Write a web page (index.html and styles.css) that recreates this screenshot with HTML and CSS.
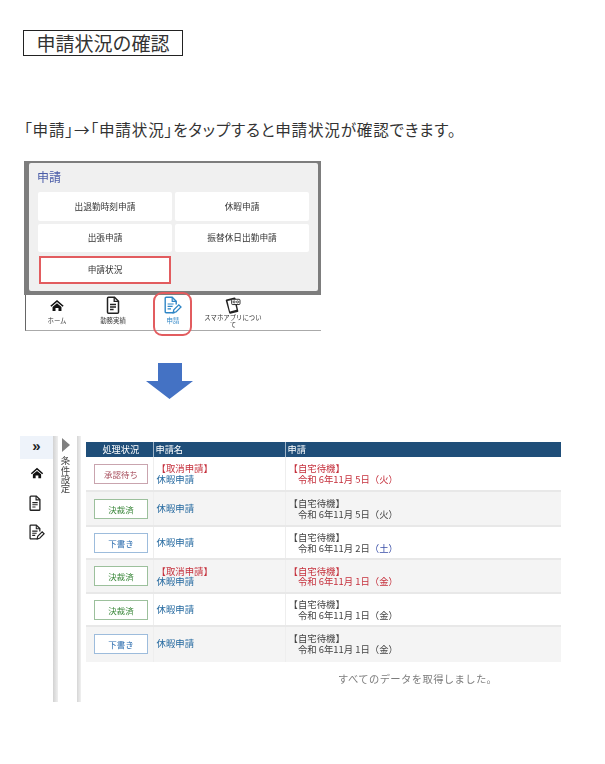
FILE: index.html
```html
<!DOCTYPE html>
<html lang="ja">
<head>
<meta charset="utf-8">
<title>申請状況の確認</title>
<link rel="stylesheet" href="styles.css">
</head>
<body>
<svg class="defs" width="0" height="0" aria-hidden="true">
  <symbol id="i-home" viewBox="0 0 16 14"><path d="M8 1 .8 7.2 2 8.4 8 3.3l6 5.1 1.2-1.2z"/><path d="M3.2 8.6 8 4.6l4.8 4V13H9.6V9.8H6.4V13H3.2z"/></symbol>
  <symbol id="i-doc" viewBox="0 0 14 18"><path fill="none" stroke="currentColor" stroke-width="1.5" d="M1.5 2.2q0-1 1-1h6l4 4v11q0 1-1 1h-9q-1 0-1-1z"/><path fill="none" stroke="currentColor" stroke-width="1.3" d="M8.2 1.2v4.2h4.3M4 8.5h6M4 11h6M4 13.5h3.6"/></symbol>
  <symbol id="i-edit" viewBox="0 0 18 18"><path fill="none" stroke="currentColor" stroke-width="1.4" d="M10.5 16.8H2.2q-1 0-1-1V2.2q0-1 1-1h6l4 4v3.2"/><path fill="none" stroke="currentColor" stroke-width="1.2" d="M8.2 1.2v4.2h4.2M3.6 8h6M3.6 10.4h5M3.6 12.8h3.4"/><path fill="none" stroke="currentColor" stroke-width="1.3" d="m9.2 16.6.6-2.8 5-5 2.2 2.2-5 5z"/></symbol>
  <symbol id="i-phone" viewBox="0 0 16 18"><path d="M1 2.6 9.4.6q1-.2 1.2.8l3 13.4q.2 1-.8 1.2l-7.6 1.8q-1 .2-1.2-.8L.3 3.8Q.1 2.8 1 2.6z"/><path fill="#fff" d="m2.2 4.2 7-1.6 2.6 11-7 1.7z"/><rect x="6.6" y="2.4" width="8.8" height="5.6" rx="1" fill="#fff" stroke="#222"/><circle cx="9.2" cy="5.2" r="1.1" fill="none" stroke="#222" stroke-width=".8"/><circle cx="12.8" cy="5.2" r="1.1" fill="none" stroke="#222" stroke-width=".8"/></symbol>
</svg>

<main class="page">
  <h1 class="title">申請状況の確認</h1>
  <p class="lead">「申請」→「申請状況」をタップすると申請状況が確認できます。</p>

  <section class="phone-shot">
    <div class="menu-frame">
      <div class="menu">
        <h2 class="menu-title">申請</h2>
        <div class="menu-grid">
          <div class="menu-btn">出退勤時刻申請</div>
          <div class="menu-btn">休暇申請</div>
          <div class="menu-btn">出張申請</div>
          <div class="menu-btn">振替休日出勤申請</div>
          <div class="menu-btn menu-btn-marked">申請状況</div>
        </div>
      </div>
    </div>
    <nav class="tabs">
      <div class="tab"><svg class="tab-icon ic-home"><use href="#i-home"/></svg><span>ホーム</span></div>
      <div class="tab"><svg class="tab-icon ic-doc"><use href="#i-doc"/></svg><span>勤務実績</span></div>
      <div class="tab tab-active"><svg class="tab-icon ic-edit"><use href="#i-edit"/></svg><span>申請</span></div>
      <div class="tab"><svg class="tab-icon ic-phone"><use href="#i-phone"/></svg><span class="tab-wrap">スマホアプリについて</span></div>
    </nav>
  </section>

  <svg class="arrow" viewBox="0 0 47 36" aria-hidden="true"><path d="M12 0h24v18h11L23.5 36 0 18h12z"/></svg>

  <section class="list-shot">
    <aside class="side">
      <div class="side-top">»</div>
      <svg class="side-icon side-home"><use href="#i-home"/></svg>
      <svg class="side-icon side-doc"><use href="#i-doc"/></svg>
      <svg class="side-icon side-edit"><use href="#i-edit"/></svg>
    </aside>
    <div class="filter">
      <span class="filter-arrow"></span>
      <span class="filter-text">条件設定</span>
    </div>
    <div class="content">
      <table class="list">
        <colgroup><col class="c1"><col class="c2"><col class="c3"></colgroup>
        <thead>
          <tr><th class="center">処理状況</th><th>申請名</th><th>申請</th></tr>
        </thead>
        <tbody>
          <tr class="r1">
            <td><div class="badge badge-wait">承認待ち</div></td>
            <td><div class="red">【取消申請】</div><div class="blue">休暇申請</div></td>
            <td class="red"><div>【自宅待機】</div><div>　令和 6年11月 5日（火）</div></td>
          </tr>
          <tr class="r2">
            <td><div class="badge badge-done">決裁済</div></td>
            <td><div class="blue">休暇申請</div></td>
            <td><div>【自宅待機】</div><div>　令和 6年11月 5日（火）</div></td>
          </tr>
          <tr class="r3">
            <td><div class="badge badge-draft">下書き</div></td>
            <td><div class="blue">休暇申請</div></td>
            <td><div>【自宅待機】</div><div>　令和 6年11月 2日<span class="sat">（土）</span></div></td>
          </tr>
          <tr class="r4">
            <td><div class="badge badge-done">決裁済</div></td>
            <td><div class="red">【取消申請】</div><div class="blue">休暇申請</div></td>
            <td class="red"><div>【自宅待機】</div><div>　令和 6年11月 1日（金）</div></td>
          </tr>
          <tr class="r5">
            <td><div class="badge badge-done">決裁済</div></td>
            <td><div class="blue">休暇申請</div></td>
            <td><div>【自宅待機】</div><div>　令和 6年11月 1日（金）</div></td>
          </tr>
          <tr class="r6">
            <td><div class="badge badge-draft">下書き</div></td>
            <td><div class="blue">休暇申請</div></td>
            <td><div>【自宅待機】</div><div>　令和 6年11月 1日（金）</div></td>
          </tr>
        </tbody>
      </table>
      <p class="done">すべてのデータを取得しました。</p>
    </div>
  </section>
</main>
</body>
</html>
```

FILE: styles.css
```css
* { box-sizing: border-box; }
html, body { margin: 0; background: #fff; }
body { font-family: "Noto Sans CJK JP", "Noto Sans", sans-serif; color: #111; }
.defs { display: block; height: 0; }
.page { width: 605px; height: 764px; padding-top: 30px; overflow: hidden; }

.title {
  width: 160px; height: 26px; margin: 0 0 0 23px;
  border: 1px solid #222;
  font-size: 19px; font-weight: 400; line-height: 23px; text-align: center;
  color: #333;
}
.lead {
  height: 20px; margin: 63px 0 0 24px;
  font-size: 15.6px; line-height: 20px; white-space: nowrap; color: #333;
  font-feature-settings: "palt"; letter-spacing: .8px;
}

/* phone screenshot */
.phone-shot { width: 297px; height: 170px; margin: 22px 0 0 24px; filter: blur(.35px); }
.menu-frame { height: 134px; padding: 2px 3px 4px 5px; background: #7d7d7d; }
.menu { height: 128px; padding: 6px 9px 0; background: #f0f0f0; border-radius: 2px; }
.menu-title { margin: 0 0 0 -1px; height: 23px; font-size: 12px; font-weight: 400; line-height: 15px; color: #4a5ca8; }
.menu-grid { display: grid; grid-template-columns: 134px 134px; grid-auto-rows: 28.5px; gap: 3px; }
.menu-btn {
  display: flex; align-items: center; justify-content: center;
  background: #fff; font-size: 8.7px; color: #333; border-radius: 2px;
}
.menu-btn-marked { border: 2px solid #e25c5f; margin: 1px 1px 0; border-radius: 0; }

.tabs {
  display: grid; grid-template-columns: 52px 60px 60px 60px 1fr; height: 36px; padding-left: 5px;
  margin-left: 1px; border-left: 1px solid #666; border-bottom: 1px solid #aaa; background: #fff;
}
.tab { position: relative; display: flex; flex-direction: column; align-items: center; padding-top: 1px; font-size: 6.4px; line-height: 7px; color: #333; }
.tab-icon { display: block; height: 18px; width: 16px; margin-bottom: 3px; }
.ic-home { fill: #111; height: 13px; margin: 3px 0 5px; }
.ic-doc { color: #222; }
.ic-edit { color: #2f86c6; width: 18px; }
.ic-phone { fill: #222; width: 16px; height: 17px; margin: 1px 0 1px; }
.tab-active { color: #2f86c6; }
.tab-active::after {
  content: ""; position: absolute; left: 10px; right: 11px; top: -3px; height: 40px;
  border: 2px solid #e25c5f; border-radius: 9px;
}
.tab-wrap { width: 60px; text-align: center; line-height: 6.5px; }

.arrow { display: block; width: 47px; height: 36px; margin: 32px 0 0 146px; fill: #4472c4; }

/* list screenshot */
.list-shot { display: flex; height: 266px; margin: 37px 0 0 20px; filter: blur(.35px); }
.side { width: 33px; display: flex; flex-direction: column; align-items: center; }
.side-top {
  width: 100%; height: 23px; background: #eef3fa; text-align: center;
  font: 700 15px/20px "Liberation Sans", sans-serif; color: #222;
}
.side-icon { display: block; color: #222; width: 14px; height: 16px; }
.side-home { fill: #111; height: 12px; margin-top: 8px; }
.side-doc { margin: 16px 3px 0 0; }
.side-edit { margin-top: 13px; width: 16px; }

.filter {
  width: 28px; display: flex; flex-direction: column; align-items: center;
  padding: 2px 9px 0 5px;
  background: linear-gradient(to right, #d2d2d2, #efefef 5px, #fff 5px, #fff 24px, #d6d6d6 24px, #f0f0f0 28px);
}
.filter-arrow { width: 0; height: 0; border-left: 8px solid #808080; border-top: 7px solid transparent; border-bottom: 7px solid transparent; margin-left: 2px; }
.filter-text { writing-mode: vertical-rl; margin-top: 4px; font-size: 9.4px; line-height: 11px; color: #444; }

.content { padding: 6px 0 0 5px; }
.list { width: 475px; table-layout: fixed; border-collapse: collapse; font-size: 9.4px; line-height: 10.5px; color: #444; }
.c1 { width: 67px; } .c2 { width: 132px; } .c3 { width: 276px; }
.list th {
  height: 15px; padding: 0 0 0 2px; background: #1f4e79; color: #fff;
  font-size: 9.2px; font-weight: 400; text-align: left; border-left: 1px solid #9fb4c8;
}
.list th:first-child { border-left: 0; }
.list th.center { text-align: center; padding: 0 0 0 3px; }
.list td { padding: 0 0 0 3px; border-top: 2px solid #e8e8e8; border-left: 1px solid #eee; vertical-align: middle; white-space: nowrap; }
.list td:first-child { padding: 0 0 0 8px; border-left: 0; }
.list tbody tr:first-child td { border-top: 0; }
.r1 { height: 34px; } .r2 { height: 35px; } .r3 { height: 33px; }
.r4 { height: 34px; } .r5 { height: 33px; } .r6 { height: 36px; }
.list .r6 td { padding-bottom: 2px; }
.r2, .r4, .r6 { background: #f4f4f4; }
.red { color: #c5303c; }
.blue { color: #23689f; }
.sat { color: #3a4fa8; }
.badge {
  width: 54px; height: 20px; border: 1px solid; background: #fff;
  font-size: 8.5px; line-height: 18px; text-align: center;
}
.badge-wait { border-color: #c9a4ae; color: #a8505f; }
.badge-done { border-color: #9cc09c; color: #3f8a3f; }
.badge-draft { border-color: #9dbcdc; color: #2b6cae; }
.done { margin: 10px 0 0 252px; font-size: 10.3px; line-height: 14px; letter-spacing: .4px; color: #7d7d7d; white-space: nowrap; }
```
